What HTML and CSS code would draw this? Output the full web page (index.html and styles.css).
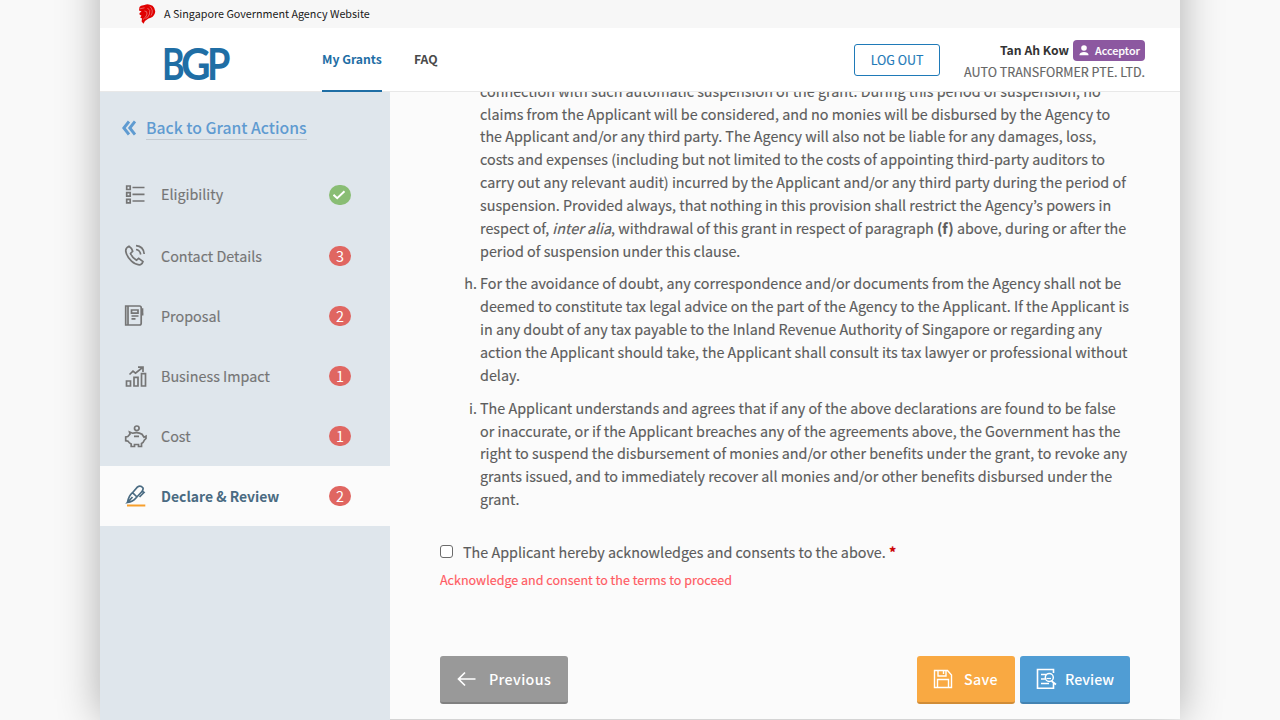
FILE: index.html
```html
<!DOCTYPE html>
<html lang="en">
<head>
<meta charset="utf-8">
<title>Business Grants Portal</title>
<link rel="stylesheet" href="styles.css">
</head>
<body>
<div class="page">
  <div class="masthead">
    <svg class="lion" width="18" height="20" viewBox="0 0 18 20"><path fill="#e00000" d="M1.500 3 3 1.800 6.500 1Q10-.8 14.500 1.800 18 5 17 9 15.500 13.500 10.500 14.500 6.500 16.500 5.500 19.800L3.600 17.500 4 14.500 2.200 13.500 3.500 11.800 1.500 10.500 1.500 9 3.500 7.500 1 6.500Z"/><path d="M6.500 7Q9.500 7 9 10T5 15.500M9.500 4Q13 6 11.500 10T7.500 14.500M12 2.500Q16 6.500 13 11.500M2 4.800 6.500 3.800" fill="none" stroke="#f7f7f7" stroke-width=".4"/></svg>
    <span class="masthead-text">A Singapore Government Agency Website</span>
  </div>
  <header class="header">
    <div class="logo"><span class="l-b">B</span><span class="l-g">G</span><span class="l-p">P</span></div>
    <nav class="nav"><a class="nav-link active">My Grants</a><a class="nav-link">FAQ</a></nav>
    <div class="logout">LOG OUT</div>
    <div class="user">
      <div class="user-top"><span class="user-name">Tan Ah Kow</span><span class="role"><svg width="10" height="11" viewBox="0 0 10 11"><circle cx="5" cy="3" r="2.800" fill="#fff"/><path d="M.500 10.300V9.500Q1 7 5 7T9.500 9.500V10.300Z" fill="#fff"/></svg><span>Acceptor</span></span></div>
      <div class="company">AUTO TRANSFORMER PTE. LTD.</div>
    </div>
  </header>
  <div class="body">
    <aside class="sidebar">
      <div class="back"><svg width="14" height="16" viewBox="0 0 14 16"><path d="M7 1.500 1.800 8 7 14.500M13 1.500 7.800 8 13 14.500" fill="none" stroke="#5f9bd1" stroke-width="2.900"/></svg><span class="back-text">Back to Grant Actions</span></div>
      <div class="item item-first"><svg class="ico" viewBox="0 0 24 24"><path d="M2.700 3h3.500V6.500h-3.500zM2.700 9.700h3.500v3.500h-3.500zM2.700 16.400h3.500v3.500h-3.500zM8.500 4.500h12M8.500 11.300h12M8.500 18h12"/></svg><span class="label">Eligibility</span><span class="badge ok"><svg width="14" height="10" viewBox="0 0 14 10"><path d="M.500 4.800 4.200 8.300 11.500 1.300" fill="none" stroke="#fff" stroke-width="1.900"/></svg></span></div>
      <div class="item"><svg class="ico" viewBox="0 0 24 24"><path d="M5 2.200Q1.300 4 1.800 7.500 3 13 7.500 17.200T16.500 20.700Q18.500 19.800 19 17.500L14.700 14.300 12.500 16.200Q8 13.500 6.500 9.500L8.700 7.300Q8 4 5 2.200ZM12 1.700Q19.500 2.300 20.200 10M12 5.500Q16 6 16.700 10.500"/></svg><span class="label">Contact Details</span><span class="badge">3</span></div>
      <div class="item"><svg class="ico" viewBox="0 0 24 24"><path d="M1.700 2H15.500Q17.200 2 17.200 3.700V19.300Q17.200 21 15.500 21H1.700ZM4 2V21M7.500 6h6.500v3.200H7.500zM7.500 12h7M7.500 14.800h4M17.200 5h1.300v4h-1.300M18.600 9v2.500"/></svg><span class="label">Proposal</span><span class="badge">2</span></div>
      <div class="item"><svg class="ico" viewBox="0 0 24 24"><path d="M2.500 17h4V22h-4zM10 13.300h4v8.700h-4zM17.500 9.700h4v12.300h-4zM5.500 10.500 9 7.200 11.500 9.200 18.500 3.500M14 3.200H19V8"/></svg><span class="label">Business Impact</span><span class="badge">1</span></div>
      <div class="item"><svg class="ico" viewBox="0 0 24 24"><circle cx="12.800" cy="4.300" r="2.300"/><path d="M5.500 8 8.500 9.200Q14 7.500 18 10.200L20 13.200 22 12.200V14.500L20.300 16.200Q19.500 18.500 17.500 19.500V22.500H14.500V20.500H10.500V22.500H7.200V20Q5 19 4 17.200L1.700 16.700V13L3.800 12.500 6 10ZM10 12.300h5"/></svg><span class="label">Cost</span><span class="badge">1</span></div>
      <div class="item current"><svg class="ico" viewBox="0 0 24 24"><path d="M3.500 18.500Q4.500 12 8.500 8.700L13.500 3Q16.500 1 19 4 19.500 6 17.500 8L11.500 14.500Q9 17.500 3.500 18.500L8.500 13M8.500 8.700 12.500 12.500M18.500 7.500 20 8.500 15.500 13"/><path d="M3 21.500h18.300" stroke="#f79f2c" stroke-width="2"/></svg><span class="label">Declare &amp; Review</span><span class="badge">2</span></div>
    </aside>
    <main class="main">
      <div class="terms">
        <div class="clause"><span class="mark"></span><p>connection with such automatic suspension of the grant. During this period of suspension, no<br>claims from the Applicant will be considered, and no monies will be disbursed by the Agency to<br>the Applicant and/or any third party. The Agency will also not be liable for any damages, loss,<br>costs and expenses (including but not limited to the costs of appointing third-party auditors to<br>carry out any relevant audit) incurred by the Applicant and/or any third party during the period of<br>suspension. Provided always, that nothing in this provision shall restrict the Agency’s powers in<br>respect of, <em>inter alia</em>, withdrawal of this grant in respect of paragraph <b>(f)</b> above, during or after the<br>period of suspension under this clause.</p></div>
        <div class="clause"><span class="mark">h.</span><p>For the avoidance of doubt, any correspondence and/or documents from the Agency shall not be<br>deemed to constitute tax legal advice on the part of the Agency to the Applicant. If the Applicant is<br>in any doubt of any tax payable to the Inland Revenue Authority of Singapore or regarding any<br>action the Applicant should take, the Applicant shall consult its tax lawyer or professional without<br>delay.</p></div>
        <div class="clause"><span class="mark">i.</span><p>The Applicant understands and agrees that if any of the above declarations are found to be false<br>or inaccurate, or if the Applicant breaches any of the agreements above, the Government has the<br>right to suspend the disbursement of monies and/or other benefits under the grant, to revoke any<br>grants issued, and to immediately recover all monies and/or other benefits disbursed under the<br>grant.</p></div>
      </div>
      <label class="ack"><span class="box"></span><span>The Applicant hereby acknowledges and consents to the above. <b class="req">*</b></span></label>
      <div class="error">Acknowledge and consent to the terms to proceed</div>
      <div class="actions">
        <div class="btn prev"><svg width="20" height="16" viewBox="0 0 20 16"><path d="M18.500 8H1.500M8 1.500 1.500 8 8 14.500" fill="none" stroke="#fff" stroke-width="1.700"/></svg><span>Previous</span></div>
        <div class="btn save"><svg width="20" height="20" viewBox="0 0 20 20"><path d="M1.500 1.500H14.500L18.500 6V18.500H1.500ZM5 1.500V7H13V1.500M10.500 2V5M4.500 18V10.500H15.500V18" fill="none" stroke="#fff" stroke-width="1.400"/></svg><span>Save</span></div>
        <div class="btn review"><svg width="21" height="22" viewBox="0 0 21 22"><path d="M17.500 15V20.300H1.500V1.500H17.500V5M5 6.500H11M5 11H9M5 15.500H13M15.500 13 20 16.500" fill="none" stroke="#fff" stroke-width="1.600"/><circle cx="13.300" cy="9.500" r="4" fill="none" stroke="#fff" stroke-width="1.500"/><path d="M10.500 10.500H15" stroke="#fff" stroke-width="1.200"/></svg><span>Review</span></div>
      </div>
    </main>
  </div>
</div>
</body>
</html>
```
FILE: styles.css
```css
* { box-sizing: border-box; }
body { margin: 0; height: 720px; overflow: hidden; background: #f9f9f9; font-family: "Noto Sans CJK KR", "Noto Sans", sans-serif; color: #5c5c5c; -webkit-text-stroke: .15px currentColor; }
.page { width: 1080px; height: 819px; margin: -100px auto 0; padding-top: 100px; background: #fbfbfb; box-shadow: 0 0 40px rgba(0,0,0,.3); display: flex; flex-direction: column; }
.masthead { height: 28px; flex: none; background: #f7f7f7; display: flex; align-items: center; padding-left: 38px; gap: 8px; }
.masthead-text { font-size: 10.750px; line-height: 20px; margin-top: -1px; color: #1a1a1a; -webkit-text-stroke: 0; }
.header { height: 64px; flex: none; background: #fff; border-bottom: 1px solid #e8e8e8; display: flex; padding-right: 35px; }
.logo { width: 158px; margin-left: 64px; font: 700 43px/72px Lato, sans-serif; letter-spacing: -7px; color: #1f6ea5; white-space: nowrap; -webkit-text-stroke: 0; }
.logo span { display: inline-block; transform-origin: left center; }
.l-b { transform: translateX(-2px) scaleX(.8); }
.l-g { transform: translateX(-4px) scaleX(.95); }
.l-p { transform: translateX(-3px) scaleX(.88); }
.nav { display: flex; gap: 32px; flex: 1; }
.nav-link { height: 64px; font-size: 12.200px; font-weight: 700; line-height: 62px; color: #4a4a4a; white-space: nowrap; -webkit-text-stroke: 0; }
.nav-link.active { color: #1f6ea5; border-bottom: 2px solid #1f6ea5; }
.logout { width: 86px; height: 32px; margin: 16px 24px 0 0; border: 1px solid #1f7ab8; border-radius: 3px; color: #1f7ab8; font-size: 12.500px; line-height: 30px; text-align: center; }
.user { text-align: right; padding-top: 12px; white-space: nowrap; }
.user-top { display: flex; justify-content: flex-end; gap: 4px; line-height: 20px; }
.user-name { font-size: 12.200px; font-weight: 700; color: #333; -webkit-text-stroke: 0; }
.role { display: flex; align-items: center; gap: 6px; width: 72px; height: 21px; padding-left: 6px; border-radius: 4px; background: #8c58a0; color: #fff; font-size: 10.750px; font-weight: 500; }
.company { font-size: 12.530px; line-height: 22px; color: #666; }
.body { display: flex; flex: 1; min-height: 0; }
.sidebar { width: 290px; height: 628px; background: #dfe6ec; padding-top: 20px; }
.back { display: flex; align-items: center; gap: 10px; height: 32px; padding-left: 22px; color: #5f9bd1; }
.back-text { font-size: 15.720px; line-height: 22px; font-weight: 500; border-bottom: 1px solid #c4cad0; white-space: nowrap; -webkit-text-stroke: 0; }
.item { height: 60px; display: flex; align-items: center; padding: 0 39px 0 24px; color: #757575; }
.item-first { height: 62px; margin-top: 20px; }
.item-first .label { margin-top: -2px; }
.ico { width: 24px; height: 24px; margin-right: 13px; fill: none; stroke: #757575; stroke-width: 1.700; }
.label { flex: 1; font-size: 14.340px; line-height: 24px; }
.badge { width: 22px; height: 20px; border-radius: 10px; background: #e06661; color: #fff; font-size: 14.400px; line-height: 20px; display: flex; align-items: center; justify-content: center; -webkit-text-stroke: 0; }
.ok { background: #89bd74; }
.current { background: #fbfbfb; color: #4a6b82; }
.current .label { font-size: 13.950px; font-weight: 700; -webkit-text-stroke: 0; }
.current .ico { stroke: #4a6b82; }
.main { width: 790px; padding: 0 50px; clip-path: inset(0); }
.terms { margin-top: -12.300px; font-size: 14.335px; line-height: 22.850px; }
.clause { display: flex; margin-bottom: 10px; }
.clause p { margin: 0; white-space: nowrap; }
.mark { width: 40px; flex: none; text-align: right; padding-right: 3px; }
.ack { display: flex; gap: 10px; margin-top: 29.300px; font-size: 14.330px; line-height: 24px; }
.box { width: 13px; height: 13px; margin-top: 5px; border: 1px solid #6b6b6b; border-radius: 3px; background: #fff; }
.req { color: #c00; }
.error { margin-top: 6px; font-size: 12.540px; line-height: 20px; color: #ff5a62; }
.actions { display: flex; margin-top: 66px; }
.btn { height: 48px; display: flex; align-items: center; border-radius: 3px; border-bottom: 2px solid rgba(0,0,0,.16); color: #fff; font-size: 14.250px; font-weight: 500; letter-spacing: .35px; -webkit-text-stroke: 0; }
.btn span { margin-top: -1px; }
.prev { width: 128px; padding-left: 17px; gap: 12px; background: #999; margin-right: auto; }
.save { width: 98px; padding-left: 16px; gap: 11px; background: #f9a942; margin-right: 5px; }
.review { width: 110px; padding-left: 16px; gap: 8px; background: #509dd4; letter-spacing: 0; }
```
